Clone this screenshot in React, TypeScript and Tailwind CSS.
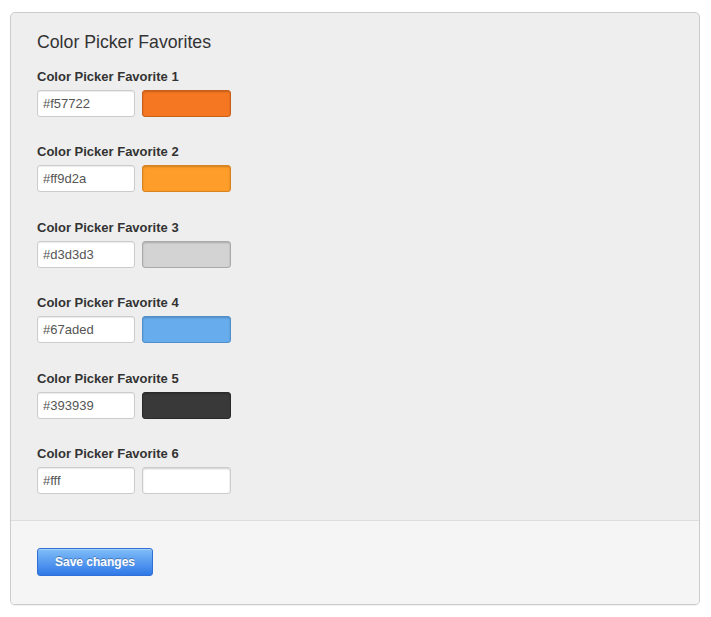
import React from "react";

const favorites = [
  { n: 1, hex: "#f57722", border: "border-[#c9601a]" },
  { n: 2, hex: "#ff9d2a", border: "border-[#d88320]" },
  { n: 3, hex: "#d3d3d3", border: "border-[#aaaaaa]" },
  { n: 4, hex: "#67aded", border: "border-[#4f8fcc]" },
  { n: 5, hex: "#393939", border: "border-[#2a2a2a]" },
  { n: 6, hex: "#fff", border: "border-[#cccccc]" },
];

export default function App() {
  return (
    <div className="min-h-[617px] bg-white pt-[12px] pl-[10px] pr-[11px] font-['Liberation_Sans',Arial,sans-serif]">
      <div className="w-[690px] rounded-[5px] border border-[#cccccc] bg-[#eeeeee] overflow-hidden shadow-[0_1px_1px_rgba(0,0,0,0.06)]">
        <div className="pt-[17px] pl-[26px] pr-[26px]">
          <h2 className="text-[17.7px] leading-[24px] text-[#333333] mb-[14px]">Color Picker Favorites</h2>
          {favorites.map((f) => (
            <div key={f.n} className="mb-[26.4px]">
              <div className="text-[13px] leading-[18px] font-bold text-[#333333] mb-[4px]">
                Color Picker Favorite {f.n}
              </div>
              <div className="flex gap-[7px]">
                <input
                  readOnly
                  value={f.hex}
                  className="w-[98px] h-[27px] rounded-[3px] border border-[#cccccc] bg-white px-[5px] text-[13px] text-[#555555] shadow-[inset_0_1px_1px_rgba(0,0,0,0.08)] outline-none font-['Liberation_Sans',Arial,sans-serif]"
                />
                <div
                  className={`w-[89px] h-[27px] rounded-[3px] border ${f.border} shadow-[inset_0_1px_2px_rgba(0,0,0,0.2)]`}
                  style={{ backgroundColor: f.hex }}
                />
              </div>
            </div>
          ))}
        </div>
        <div className="border-t border-[#dddddd] bg-[#f5f5f5] pt-[27px] pb-[28px] pl-[26px]">
          <button className="w-[116px] h-[28px] rounded-[3px] border border-[#2f6fd6] bg-gradient-to-b from-[#80bdf7] to-[#2f78e8] text-white text-[12px] font-bold [text-shadow:0_-1px_0_rgba(0,0,0,0.3)] shadow-[inset_0_1px_0_rgba(255,255,255,0.3)]">
            Save changes
          </button>
        </div>
      </div>
    </div>
  );
}
